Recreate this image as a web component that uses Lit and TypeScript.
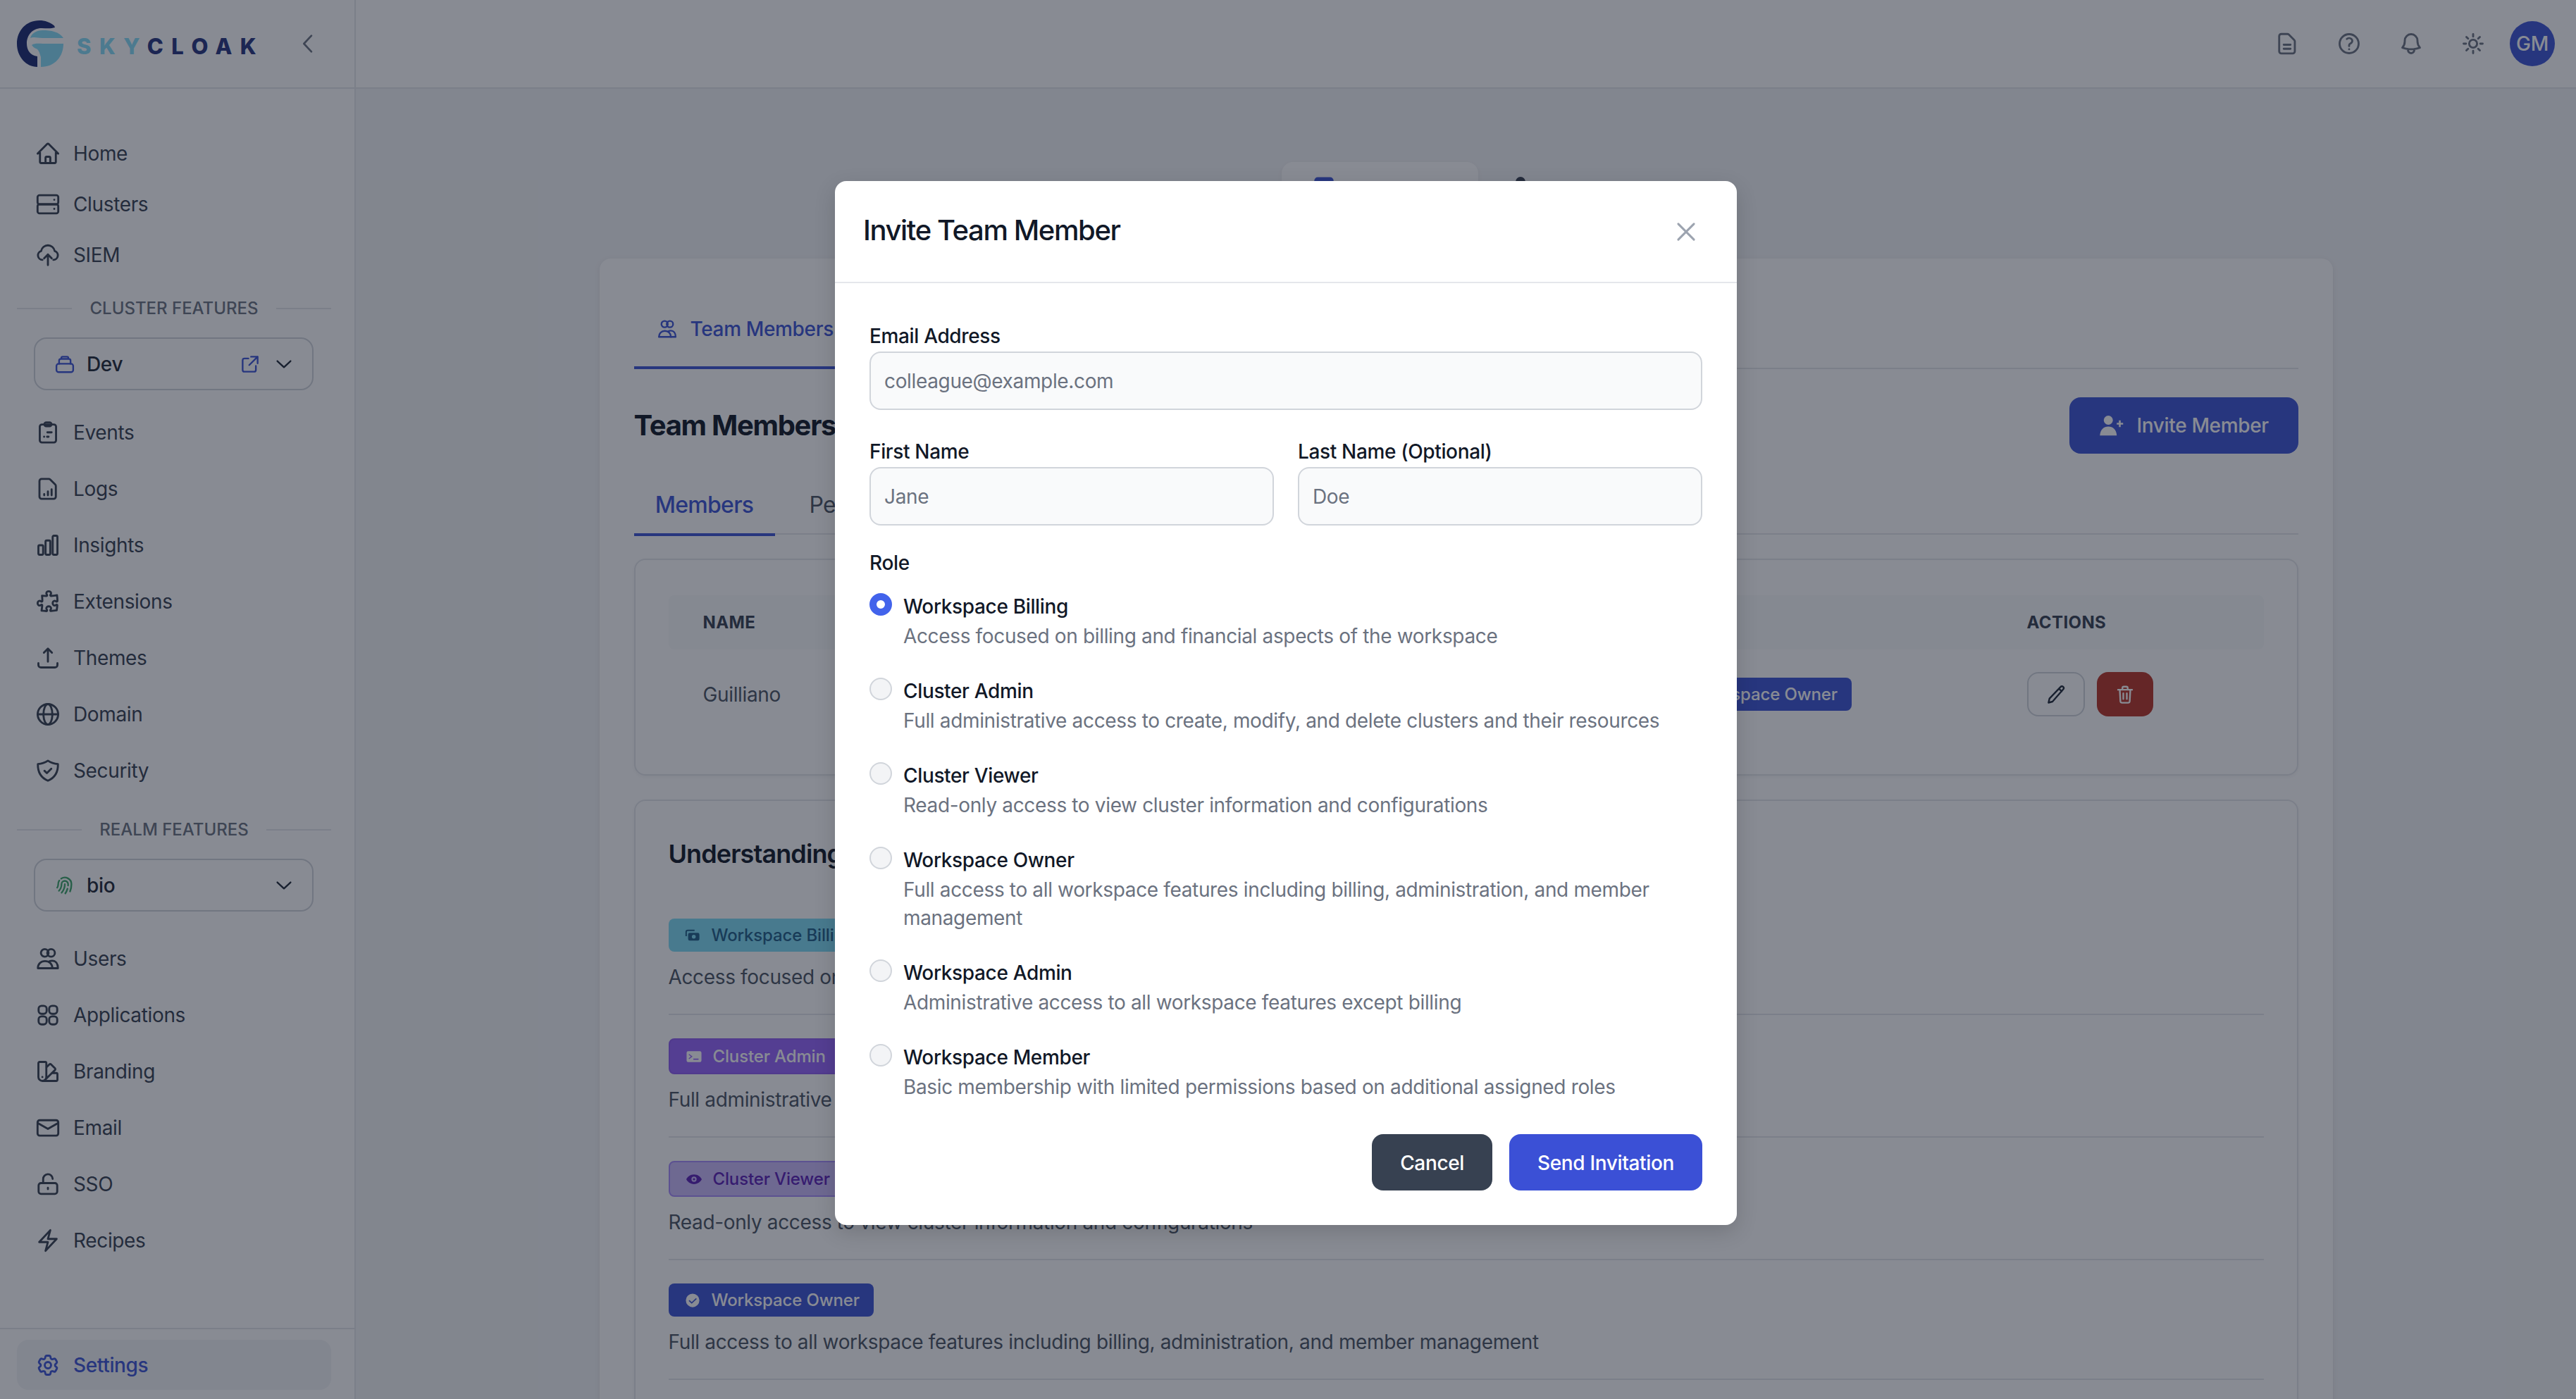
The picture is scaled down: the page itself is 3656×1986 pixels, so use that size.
import { LitElement, html, css, svg } from 'lit';
import { customElement } from 'lit/decorators.js';

const icon = (body: unknown, cls = '') =>
  html`<svg class="ico ${cls}" viewBox="0 0 24 24" fill="none" stroke="currentColor" stroke-width="1.9" stroke-linecap="round" stroke-linejoin="round">${body}</svg>`;

const p = (d: string) => svg`<path d=${d}></path>`;

const USERS = svg`<circle cx="9" cy="6.5" r="3.6"></circle><circle cx="15" cy="6.5" r="3.6"></circle><path d="M2.5 21c0-4.2 3-6.8 6.8-6.8s6.9 2.6 6.9 6.8z"></path><path d="M13.5 14.4c1-.4 1.6-.5 2.5-.5 3.3 0 5.5 2.7 5.5 7.1h-5.3"></path>`;

const ICONS: Record<string, unknown> = {
  home: p('M2.25 12l8.954-8.955c.44-.439 1.152-.439 1.591 0L21.75 12M4.5 9.75v10.125c0 .621.504 1.125 1.125 1.125H9.75v-4.875c0-.621.504-1.125 1.125-1.125h2.25c.621 0 1.125.504 1.125 1.125V21h4.125c.621 0 1.125-.504 1.125-1.125V9.75M8.25 21h8.25'),
  clusters: svg`<rect x="2.2" y="3.4" width="19.6" height="8.6" rx="1.8"></rect><rect x="2.2" y="12" width="19.6" height="8.6" rx="1.8"></rect><path d="M18 7.7h.01M18 16.3h.01"></path>`,
  siem: p('M12 21.5v-10m0 0l-3.6 3.6M12 11.5l3.6 3.6M6.8 16.6A4.3 4.3 0 0 1 5.6 8.2a6.5 6.5 0 0 1 12.8 0 4.3 4.3 0 0 1-1.2 8.4'),
  events: svg`<rect x="4.3" y="4.4" width="15.4" height="17" rx="2"></rect><rect x="8.6" y="2.4" width="6.8" height="3.6" rx="1.8"></rect><path d="M11.5 11.8h4M8.4 16h.01M11.2 16h1.4"></path>`,
  logs: svg`<path d="M6 2.6h6.8c.5 0 1 .2 1.4.6l4.7 4.7c.4.4.6.9.6 1.4V19.4a2 2 0 0 1-2 2H6a2 2 0 0 1-2-2V4.6a2 2 0 0 1 2-2z"></path><path d="M8.5 18v-1M12 18v-3.5M15.5 18v-5.5"></path>`,
  insights: p('M3 13.125C3 12.504 3.504 12 4.125 12h2.25c.621 0 1.125.504 1.125 1.125v6.75C7.5 20.496 6.996 21 6.375 21h-2.25A1.125 1.125 0 013 19.875v-6.75zM9.75 8.625c0-.621.504-1.125 1.125-1.125h2.25c.621 0 1.125.504 1.125 1.125v11.25c0 .621-.504 1.125-1.125 1.125h-2.25a1.125 1.125 0 01-1.125-1.125V8.625zM16.5 4.125c0-.621.504-1.125 1.125-1.125h2.25C20.496 3 21 3.504 21 4.125v15.75c0 .621-.504 1.125-1.125 1.125h-2.25a1.125 1.125 0 01-1.125-1.125V4.125z'),
  extensions: p('M14.25 6.087c0-.355.186-.676.401-.959.221-.29.349-.634.349-1.003 0-1.036-1.007-1.875-2.25-1.875s-2.25.84-2.25 1.875c0 .369.128.713.349 1.003.215.283.401.604.401.959a.64.64 0 01-.657.643 48.39 48.39 0 01-4.163-.3c.186 1.613.293 3.25.315 4.907a.656.656 0 01-.658.663c-.355 0-.676-.186-.959-.401a1.647 1.647 0 00-1.003-.349c-1.036 0-1.875 1.007-1.875 2.25s.84 2.25 1.875 2.25c.369 0 .713-.128 1.003-.349.283-.215.604-.401.959-.401.31 0 .555.26.532.57a48.039 48.039 0 01-.642 5.056c1.518.19 3.058.309 4.616.354a.64.64 0 00.657-.643c0-.355-.186-.676-.401-.959a1.647 1.647 0 01-.349-1.003c0-1.035 1.008-1.875 2.25-1.875 1.243 0 2.25.84 2.25 1.875 0 .369-.128.713-.349 1.003-.215.283-.4.604-.4.959 0 .333.277.599.61.58a48.1 48.1 0 005.427-.63 48.05 48.05 0 00.582-4.717.532.532 0 00-.533-.57c-.355 0-.676.186-.959.401-.29.221-.634.349-1.003.349-1.035 0-1.875-1.007-1.875-2.25s.84-2.25 1.875-2.25c.37 0 .713.128 1.003.349.283.215.604.401.96.401a.656.656 0 00.658-.663 48.422 48.422 0 00-.37-5.36c-1.886.342-3.81.574-5.766.689a.578.578 0 01-.61-.58z'),
  themes: p('M3 17v1.6A2.4 2.4 0 0 0 5.4 21h13.2a2.4 2.4 0 0 0 2.4-2.4V17M12 15.5V3.2m0 0L8.2 7M12 3.2L15.8 7'),
  domain: svg`<circle cx="12" cy="12" r="9.7"></circle><ellipse cx="12" cy="12" rx="4.2" ry="9.7"></ellipse><path d="M2.3 12h19.4"></path>`,
  security: svg`<path d="M12 2.6c2.8 1.9 5.9 2.9 9.5 3.1.2 7.6-2.6 13-9.5 15.8C5.100 18.700 2.300 13.300 2.500 5.700c3.600-.2 6.700-1.200 9.500-3.100z"></path><path d="M8.700 12.100l2.300 2.200 4.200-4.200"></path>`,
  users: USERS,
  apps: svg`<rect x="3.200" y="3.200" width="7.600" height="7.600" rx="2.800"></rect><rect x="13.200" y="3.200" width="7.600" height="7.600" rx="2.800"></rect><rect x="3.200" y="13.200" width="7.600" height="7.600" rx="2.800"></rect><rect x="13.200" y="13.200" width="7.600" height="7.600" rx="2.800"></rect>`,
  branding: p('M4.098 19.902a3.75 3.75 0 005.304 0l6.401-6.402M6.75 21A3.75 3.75 0 013 17.25V4.125C3 3.504 3.504 3 4.125 3h5.25c.621 0 1.125.504 1.125 1.125v4.072M6.75 21a3.75 3.75 0 003.75-3.75V8.197M6.75 21h13.125c.621 0 1.125-.504 1.125-1.125v-5.25c0-.621-.504-1.125-1.125-1.125h-4.072M10.5 8.197l2.88-2.88c.438-.439 1.15-.439 1.59 0l3.712 3.713c.44.44.44 1.152 0 1.59l-2.879 2.88M6.75 17.25h.008v.008H6.750z'),
  email: svg`<rect x="2.200" y="4.800" width="19.600" height="14.600" rx="2"></rect><path d="M2.600 7.600L12 13l9.400-5.400"></path>`,
  sso: svg`<rect x="3.200" y="11" width="17.600" height="10.200" rx="2.200"></rect><path d="M7.500 11V7.200a4.500 4.500 0 0 1 9-.2M12 15.500v1.200"></path>`,
  recipes: p('M3.750 13.500l10.500-11.250L12 10.500h8.250L9.750 21.750 12 13.500H3.750z'),
  settings: svg`<path d="M9.594 3.940c.09-.542.56-.94 1.110-.94h2.593c.55 0 1.020.398 1.110.94l.213 1.281c.063.374.313.686.645.87.074.04.147.083.22.127.324.196.72.257 1.075.124l1.217-.456a1.125 1.125 0 011.370.49l1.296 2.247a1.125 1.125 0 01-.26 1.431l-1.003.827c-.293.24-.438.613-.431.992a6.759 6.759 0 010 .255c-.007.378.138.75.43.99l1.005.828c.424.35.534.954.26 1.430l-1.298 2.247a1.125 1.125 0 01-1.369.491l-1.217-.456c-.355-.133-.75-.072-1.076.124a6.570 6.570 0 01-.22.128c-.331.183-.581.495-.644.869l-.213 1.280c-.09.543-.56.941-1.110.941h-2.594c-.55 0-1.020-.398-1.110-.94l-.213-1.281c-.062-.374-.312-.686-.644-.87a6.520 6.520 0 01-.22-.127c-.325-.196-.72-.257-1.076-.124l-1.217.456a1.125 1.125 0 01-1.369-.49l-1.297-2.247a1.125 1.125 0 01.26-1.431l1.004-.827c.292-.24.437-.613.43-.992a6.932 6.932 0 010-.255c.007-.378-.138-.75-.43-.99l-1.004-.828a1.125 1.125 0 01-.26-1.430l1.297-2.247a1.125 1.125 0 011.370-.491l1.216.456c.356.133.751.072 1.076-.124.072-.044.146-.087.22-.128.332-.183.582-.495.644-.869l.214-1.281z"></path><path d="M15 12a3 3 0 11-6 0 3 3 0 016 0z"></path>`,
  doc: svg`<path d="M6.500 2.800h5.700c.5 0 1 .2 1.400.6l5.100 5.100c.4.4.6.9.6 1.400v9.300a2 2 0 0 1-2 2H6.500a2 2 0 0 1-2-2V4.800a2 2 0 0 1 2-2z"></path><path d="M8.800 13h6.400M8.800 16.800h6.400"></path>`,
  help: p('M9.879 7.519c1.171-1.025 3.071-1.025 4.242 0 1.172 1.025 1.172 2.687 0 3.712-.203.179-.43.326-.67.442-.745.361-1.450.999-1.450 1.827v.75M21 12a9 9 0 11-18 0 9 9 0 0118 0zm-9 5.250h.008v.008H12v-.008z'),
  bell: p('M14.857 17.082a23.848 23.848 0 005.454-1.310A8.967 8.967 0 0118 9.750V9A6 6 0 006 9v.75a8.967 8.967 0 01-2.312 6.022c1.733.64 3.560 1.085 5.455 1.310m5.714 0a24.255 24.255 0 01-5.714 0m5.714 0a3 3 0 11-5.714 0'),
  sun: p('M12 3v2.250m6.364.386l-1.591 1.591M21 12h-2.250m-.386 6.364l-1.591-1.591M12 18.750V21m-4.773-4.227l-1.591 1.591M5.250 12H3m4.227-4.773L5.636 5.636M15.750 12a3.750 3.750 0 11-7.500 0 3.750 3.750 0 017.500 0z'),
  chevron: p('M4.500 8.500L12 15.500l7.500-7'),
  external: p('M13 3.500h7.500V11M20.500 3.500L11 13M10 5.500H5.500a2 2 0 0 0-2 2v11a2 2 0 0 0 2 2h11a2 2 0 0 0 2-2V14'),
  stack: svg`<rect x="2.500" y="11.500" width="19" height="9.500" rx="2.500"></rect><path d="M5.500 11.500V8a2 2 0 0 1 2-2h9a2 2 0 0 1 2 2v3.500M8 6V5a1.500 1.500 0 0 1 1.500-1.500h5A1.500 1.500 0 0 1 16 5v1"></path>`,
  print: p('M7.864 4.243A7.500 7.500 0 0119.500 10.500c0 2.920-.556 5.709-1.568 8.268M5.742 6.364A7.465 7.465 0 004.500 10.500a7.464 7.464 0 01-1.150 3.993m1.989 3.559A11.209 11.209 0 008.250 10.500a3.750 3.750 0 117.500 0c0 .527-.021 1.049-.064 1.565M12 10.500a14.940 14.940 0 01-3.600 9.750m6.633-4.596a18.666 18.666 0 01-2.485 5.330'),
  close: p('M5 5l14 14M19 5L5 19'),
  pencil: p('M17.200 3.300a2 2 0 0 1 3 2.700L8 20l-4.500 1.200L4.600 16.500zM15.500 5.500l3 2.800'),
  trash: svg`<path d="M4 6.500h16M9 6.500V4.500A1.500 1.500 0 0 1 10.500 3h3A1.500 1.500 0 0 1 15 4.500v2M6 6.500l.7 13a2 2 0 0 0 2 1.800h6.600a2 2 0 0 0 2-1.800l.7-13M10 10.500v6.500M14 10.500v6.500"></path>`,
  tabA: svg`<rect x="2" y="3" width="20" height="18" rx="3" fill="currentColor"></rect>`,
  tabB: svg`<circle cx="12" cy="7" r="4.500" fill="currentColor"></circle>`,
};

// filled glyphs inside the role badges, they sit on the badge colour
const BADGE_ICONS: Record<string, unknown> = {
  billing: svg`<path d="M2 13V6.500A2.500 2.500 0 0 1 4.500 4H15" fill="none" stroke="currentColor" stroke-width="2.200"></path><path fill-rule="evenodd" fill="currentColor" d="M7.500 8H20a2.500 2.500 0 0 1 2.500 2.500v7A2.500 2.500 0 0 1 20 20H7.500A2.500 2.500 0 0 1 5 17.500v-7A2.500 2.500 0 0 1 7.500 8zM13.800 11a3 3 0 1 0 0 6 3 3 0 0 0 0-6z"></path>`,
  terminal: svg`<path fill-rule="evenodd" fill="currentColor" d="M3 3.500h18A2.500 2.500 0 0 1 23.500 6v12a2.500 2.500 0 0 1-2.500 2.500H3A2.500 2.500 0 0 1 .5 18V6A2.500 2.500 0 0 1 3 3.500zM4.500 7.800l-.9 1.200 3.600 2.800-3.600 2.800.9 1.200 5.200-4zM11 15v1.800h8V15z"></path>`,
  eye: svg`<path fill-rule="evenodd" fill="currentColor" d="M12 4.500c6 0 10.500 4 12 7.500-1.500 3.500-6 7.500-12 7.500S1.500 15.500 0 12c1.500-3.500 6-7.500 12-7.500zM12 8a4 4 0 1 0 0 8 4 4 0 0 0 0-8zm0 2.300a1.700 1.700 0 1 1 0 3.400 1.700 1.700 0 0 1 0-3.400z"></path>`,
  check: svg`<path fill-rule="evenodd" fill="currentColor" d="M12 1.500a10.500 10.500 0 1 1 0 21 10.500 10.500 0 0 1 0-21zM17.200 8.400L10.600 14.600 7.200 11.400 5.900 12.800l4.700 4.400 7.900-7.400z"></path>`,
};

const MAIN_NAV = [['home', 'Home'], ['clusters', 'Clusters'], ['siem', 'SIEM']];
const CLUSTER_NAV = [['events', 'Events'], ['logs', 'Logs'], ['insights', 'Insights'], ['extensions', 'Extensions'], ['themes', 'Themes'], ['domain', 'Domain'], ['security', 'Security']];
const REALM_NAV = [['users', 'Users'], ['apps', 'Applications'], ['branding', 'Branding'], ['email', 'Email'], ['sso', 'SSO'], ['recipes', 'Recipes']];

const ROLES = [
  { name: 'Workspace Billing', desc: 'Access focused on billing and financial aspects of the workspace', cls: 'billing', badge: 'billing' },
  { name: 'Cluster Admin', desc: 'Full administrative access to create, modify, and delete clusters and their resources', cls: 'admin', badge: 'terminal' },
  { name: 'Cluster Viewer', desc: 'Read-only access to view cluster information and configurations', cls: 'viewer', badge: 'eye' },
  { name: 'Workspace Owner', desc: 'Full access to all workspace features including billing, administration, and member management', cls: 'owner', badge: 'check' },
  { name: 'Workspace Admin', desc: 'Administrative access to all workspace features except billing', cls: 'owner', badge: 'check' },
  { name: 'Workspace Member', desc: 'Basic membership with limited permissions based on additional assigned roles', cls: 'owner', badge: 'check' },
];

@customElement('app-root')
export class AppRoot extends LitElement {
  static styles = css`
:host {
  display: block;
  width: 3656px;
  height: 1986px;
  overflow: hidden;
  position: relative;
  font-family: Inter, "Liberation Sans", sans-serif;
  font-size: 28px;
  line-height: 40px;
  letter-spacing: -0.35px;
  color: #111827;
  background: #f3f4f6;
}
* { box-sizing: border-box; }
.ico { width: 36px; height: 36px; flex: none; display: block; }

.page { display: flex; height: 1986px; }

/* sidebar */
.sidebar {
  width: 505px;
  flex: none;
  background: #fff;
  border-right: 2px solid #e5e7eb;
  display: flex;
  flex-direction: column;
}
.brand {
  height: 126px;
  flex: none;
  border-bottom: 2px solid #e5e7eb;
  display: flex;
  align-items: center;
  padding-left: 24px;
  margin-bottom: 56px;
}
.logo { width: 66px; height: 66px; flex: none; }
.wordmark {
  margin: 7px 0 0 19px;
  width: 262px;
  font-size: 31px;
  line-height: 40px;
  font-weight: 800;
  letter-spacing: 11.5px;
  color: #27347f;
  white-space: nowrap;
}
.wordmark span { color: #86dcf7; }
.collapse { width: 34px; height: 34px; margin-left: 49px; color: #6b7280; }
.nav-row {
  display: flex;
  align-items: center;
  gap: 18px;
  margin-left: 24px;
  padding-left: 26px;
  color: #374151;
}
.top .nav-row { height: 72px; }
.grp .nav-row { height: 80px; }
.section {
  display: flex;
  align-items: center;
  height: 34px;
  margin: 23px 33px 24px 24px;
  font-size: 24px;
  line-height: 34px;
  font-weight: 500;
  letter-spacing: 0;
  color: #6b7280;
  white-space: nowrap;
}
.section.realm { margin-top: 27px; }
.section::before, .section::after { content: ""; flex: 1; height: 2px; background: #e5e7eb; }
.section span { margin: 0 25px; }
.picker {
  display: flex;
  align-items: center;
  width: 397px;
  height: 75px;
  margin: 0 0 20px 48px;
  padding-left: 27px;
  border: 2px solid #d1d5db;
  border-radius: 18px;
  font-weight: 500;
  color: #1f2937;
}
.picker.realm { margin-bottom: 27px; }
.picker .lead { width: 30px; height: 30px; margin-right: 16px; color: #3d54d5; }
.picker .lead.green { color: #3fa66a; }
.picker .out { width: 30px; height: 30px; margin-left: auto; color: #3d54d5; }
.picker .chev { width: 30px; height: 30px; margin: 0 25px 0 18px; color: #1f2937; }
.picker .chev.solo { margin-left: auto; }
.side-foot {
  margin-top: auto;
  border-top: 2px solid #e5e7eb;
  padding: 15px 33px 13px 24px;
}
.side-foot .nav-row {
  height: 71px;
  margin-left: 0;
  border-radius: 16px;
  background: #f3f4f6;
  color: #3d54d5;
  font-weight: 500;
}

/* right column */
.col { flex: 1; min-width: 0; display: flex; flex-direction: column; align-items: center; }
.topbar {
  align-self: stretch;
  height: 126px;
  flex: none;
  background: #fff;
  border-bottom: 2px solid #e5e7eb;
  display: flex;
  align-items: center;
  justify-content: flex-end;
  gap: 52px;
  padding-right: 30px;
  color: #6b7280;
}
.avatar {
  width: 64px;
  height: 64px;
  margin-left: -18px;
  border-radius: 50%;
  background: #3d54d5;
  color: #fff;
  font-weight: 500;
  display: flex;
  align-items: center;
  justify-content: center;
}
.switch {
  display: flex;
  width: 524px;
  height: 80px;
  margin: 104px 0 57px;
  flex: none;
}
.switch div { display: flex; padding: 19px 0 0 45px; color: #374151; }
.switch .on {
  width: 279px;
  background: #fff;
  border-radius: 16px;
  color: #3d54d5;
  box-shadow: 0 2px 6px rgba(0, 0, 0, 0.06);
}
.switch .ico { width: 30px; height: 30px; }

.card {
  width: 2460px;
  flex: none;
  background: #fff;
  border-radius: 16px 16px 0 0;
  padding: 46px 49px 0;
  box-shadow: 0 2px 8px rgba(0, 0, 0, 0.08);
}
.tabs { display: flex; border-bottom: 2px solid #e5e7eb; }
.tabs .active {
  display: flex;
  align-items: center;
  gap: 18px;
  height: 111px;
  width: 400px;
  margin-bottom: -2px;
  padding: 0 0 0 32px;
  color: #3d54d5;
  font-weight: 500;
  border-bottom: 4px solid #3d54d5;
}
.tabs .ico { width: 30px; height: 30px; }
.head { display: flex; justify-content: space-between; align-items: center; height: 80px; margin-top: 40px; }
.head h2 { margin: 0; font-size: 40px; line-height: 56px; font-weight: 700; letter-spacing: -1.3px; }
.primary-btn {
  display: flex;
  align-items: center;
  gap: 19px;
  height: 80px;
  width: 325px;
  padding-left: 41px;
  border: 0;
  border-radius: 16px;
  background: #3d54d5;
  color: #fff;
  font: inherit;
  letter-spacing: inherit;
  font-weight: 500;
}
.primary-btn svg { width: 36px; height: 36px; fill: #fff; }
.subtabs {
  display: flex;
  height: 85px;
  margin-top: 30px;
  border-bottom: 2px solid #e5e7eb;
  font-size: 32px;
  letter-spacing: -0.7px;
}
.subtabs div { padding-top: 23px; height: 87px; line-height: 40px; }
.subtabs .active { width: 200px; text-align: center; color: #3d54d5; font-weight: 500; border-bottom: 4px solid #3d54d5; }
.subtabs .off { padding-left: 49px; color: #4b5563; }
.panel {
  border: 2px solid #e5e7eb;
  border-radius: 16px;
  padding: 50px 47px;
  margin-top: 34px;
  box-shadow: 0 2px 6px rgba(0, 0, 0, 0.05);
}
.thead, .trow { display: grid; grid-template-columns: 1388px 540px 1fr; align-items: center; }
.thead {
  height: 77px;
  background: #f9fafb;
  border-radius: 8px;
  font-size: 24px;
  font-weight: 700;
  letter-spacing: 0.4px;
  color: #374151;
}
.thead span:first-child, .trow > span:first-child { padding-left: 49px; }
.trow { height: 127px; color: #4b5563; }
.actions { display: flex; gap: 17px; }
.act {
  width: 82px;
  height: 63px;
  border-radius: 16px;
  border: 2px solid #d1d5db;
  display: flex;
  align-items: center;
  justify-content: center;
  color: #1f2937;
}
.act .ico { width: 30px; height: 30px; }
.act.del { width: 80px; border: 0; background: #b83426; color: #fff; }
.badge {
  display: inline-flex;
  align-items: center;
  gap: 16px;
  height: 47px;
  padding: 0 20px 0 23px;
  border-radius: 8px;
  font-size: 24px;
  line-height: 30px;
  font-weight: 500;
  letter-spacing: -0.15px;
  vertical-align: top;
}
.badge svg { width: 22px; height: 22px; flex: none; }
.badge.billing { background: #7fdcf5; color: #1f5f88; }
.badge.admin { background: #9764fd; color: #fff; border: 2px solid #8f5cf0; height: 51px; }
.badge.viewer { background: #cbbafb; color: #5b21b6; border: 2px solid #a78bfa; height: 51px; }
.badge.owner { background: #3d54d5; color: #fff; }
.roles { margin-top: 34px; padding-top: 49px; }
.roles h3 { margin: 0 0 66px; font-size: 36px; line-height: 52px; font-weight: 600; letter-spacing: -0.9px; }
.role-item { padding-bottom: 32px; margin-bottom: 33px; border-bottom: 2px solid #e5e7eb; }
.role-item p { margin: 16px 0 0; color: #4b5563; }

/* dialog */
.overlay {
  position: absolute;
  inset: 0;
  background: rgba(17, 24, 39, 0.5);
}
.modal {
  position: absolute;
  left: 1185px;
  top: 257px;
  width: 1280px;
  height: 1482px;
  background: #fff;
  border-radius: 16px;
  box-shadow: 0 10px 30px rgba(0, 0, 0, 0.15);
}
.modal-head {
  display: flex;
  align-items: center;
  justify-content: space-between;
  height: 145px;
  padding: 0 53px 4px 40px;
  border-bottom: 2px solid #e5e7eb;
}
.modal-head h2 { margin: 0; font-size: 40px; line-height: 56px; font-weight: 500; letter-spacing: -1.4px; }
.modal-head .ico { width: 38px; height: 38px; color: #9ca3af; margin-top: 5px; }
.modal-body { padding: 55px 49px 0; }
.field-label { display: block; font-weight: 500; color: #111827; }
.input {
  display: flex;
  align-items: center;
  height: 83px;
  margin-top: 2px;
  padding-left: 19px;
  border: 2px solid #d1d5db;
  border-radius: 16px;
  background: #f9fafb;
  color: #6b7280;
}
.names { display: grid; grid-template-columns: 1fr 1fr; gap: 34px; margin-top: 39px; }
.role-label { margin-top: 33px; }
.radios { margin-top: 22px; display: flex; flex-direction: column; gap: 38px; }
.radio { display: flex; gap: 16px; }
.dot {
  width: 32px;
  height: 32px;
  flex: none;
  margin-top: 1px;
  border-radius: 50%;
  border: 2px solid #d1d5db;
  background: #f3f4f6;
}
.dot.on { border: 10px solid #4263eb; background: #fff; }
.radio b { display: block; font-weight: 500; color: #111827; }
.radio small { display: block; margin-top: 2px; font-size: 28px; color: #6b7280; }
.buttons { display: flex; justify-content: flex-end; gap: 24px; margin-top: 47px; }
.buttons div {
  display: flex;
  align-items: center;
  height: 80px;
  padding: 1px 40px 0;
  border-radius: 16px;
  color: #fff;
  font-weight: 500;
}
.cancel { background: #374151; }
.send { background: #3b50d6; }
  `;

  private navRow(key: string, label: string) {
    return html`<div class="nav-row">${icon(ICONS[key])}<span>${label}</span></div>`;
  }

  private renderSidebar() {
    return html`
      <aside class="sidebar">
        <div class="brand">
          <svg class="logo" viewBox="0 0 66 66">
            <path fill="#1b2a72" d="M53 7.500C47 2.500 40 0 32 0 13 0 0 14.500 0 33s13 33 29 33V51c-10-1-15-9-15-18 0-12 8-22 21-22 7 0 13 1 19-1z"></path>
            <path fill="#86dcf7" d="M19 25c2-7 9-11 17-11 13 0 24 2 30 11H36c-7 0-12-2-17 0z"></path>
            <path fill="#86dcf7" d="M21 35c4-3 10-2 16-2h29c0 18-12 33-32 33v-14c-2-6-3-11-7-12-3-1-4-3-6-5z"></path>
          </svg>
          <div class="wordmark"><span>SKY</span>CLOAK</div>
          ${icon(p('M15.500 4L8 12l7.500 8'), 'collapse')}
        </div>
        <div class="top">${MAIN_NAV.map(([k, l]) => this.navRow(k, l))}</div>
        <div class="section"><span>CLUSTER FEATURES</span></div>
        <div class="picker">
          ${icon(ICONS.stack, 'lead')}<span>Dev</span>
          ${icon(ICONS.external, 'out')}${icon(ICONS.chevron, 'chev')}
        </div>
        <div class="grp">${CLUSTER_NAV.map(([k, l]) => this.navRow(k, l))}</div>
        <div class="section realm"><span>REALM FEATURES</span></div>
        <div class="picker realm">
          ${icon(ICONS.print, 'lead green')}<span>bio</span>
          ${icon(ICONS.chevron, 'chev solo')}
        </div>
        <div class="grp">${REALM_NAV.map(([k, l]) => this.navRow(k, l))}</div>
        <div class="side-foot">${this.navRow('settings', 'Settings')}</div>
      </aside>
    `;
  }

  private badge(role: (typeof ROLES)[number]) {
    return html`<span class="badge ${role.cls}"><svg viewBox="0 0 24 24">${BADGE_ICONS[role.badge]}</svg>${role.name}</span>`;
  }

  private renderMain() {
    return html`
      <div class="col">
        <header class="topbar">
          ${icon(ICONS.doc)}${icon(ICONS.help)}${icon(ICONS.bell)}${icon(ICONS.sun)}
          <div class="avatar">GM</div>
        </header>
        <div class="switch">
          <div class="on">${icon(ICONS.tabA)}</div>
          <div>${icon(ICONS.tabB)}</div>
        </div>
        <section class="card">
          <div class="tabs">
            <div class="active">${icon(USERS)}<span>Team Members</span></div>
          </div>
          <div class="head">
            <h2>Team Members</h2>
            <button class="primary-btn">
              <svg viewBox="0 0 24 24"><circle cx="9.500" cy="7" r="4.300"></circle><path d="M1.500 21.500c.4-5.500 3.600-8.500 8-8.500s7.600 3 8 8.500z"></path><path d="M17.500 9.500h2v-2.400h1.700v2.400h2.300v1.700h-2.300v2.300h-1.700v-2.300h-2z"></path></svg>
              Invite Member
            </button>
          </div>
          <div class="subtabs">
            <div class="active">Members</div>
            <div class="off">Permissions</div>
          </div>
          <div class="panel">
            <div class="thead"><span>NAME</span><span></span><span>ACTIONS</span></div>
            <div class="trow">
              <span>Guilliano</span>
              <span>${this.badge(ROLES[3])}</span>
              <span class="actions">
                <span class="act">${icon(ICONS.pencil)}</span>
                <span class="act del">${icon(ICONS.trash)}</span>
              </span>
            </div>
          </div>
          <div class="panel roles">
            <h3>Understanding Roles</h3>
            ${ROLES.slice(0, 4).map(
              (r) => html`<div class="role-item">${this.badge(r)}<p>${r.desc}</p></div>`
            )}
          </div>
        </section>
      </div>
    `;
  }

  private renderModal() {
    return html`
      <div class="overlay">
        <div class="modal">
          <div class="modal-head">
            <h2>Invite Team Member</h2>
            ${icon(ICONS.close)}
          </div>
          <div class="modal-body">
            <label class="field-label">Email Address</label>
            <div class="input">colleague@example.com</div>
            <div class="names">
              <div><label class="field-label">First Name</label><div class="input">Jane</div></div>
              <div><label class="field-label">Last Name (Optional)</label><div class="input">Doe</div></div>
            </div>
            <label class="field-label role-label">Role</label>
            <div class="radios">
              ${ROLES.map(
                (r, i) => html`<div class="radio">
                  <span class="dot ${i === 0 ? 'on' : ''}"></span>
                  <div><b>${r.name}</b><small>${r.desc}</small></div>
                </div>`
              )}
            </div>
            <div class="buttons">
              <div class="cancel">Cancel</div>
              <div class="send">Send Invitation</div>
            </div>
          </div>
        </div>
      </div>
    `;
  }

  render() {
    return html`
      <div class="page">${this.renderSidebar()}${this.renderMain()}</div>
      ${this.renderModal()}
    `;
  }
}

declare global {
  interface HTMLElementTagNameMap {
    'app-root': AppRoot;
  }
}
